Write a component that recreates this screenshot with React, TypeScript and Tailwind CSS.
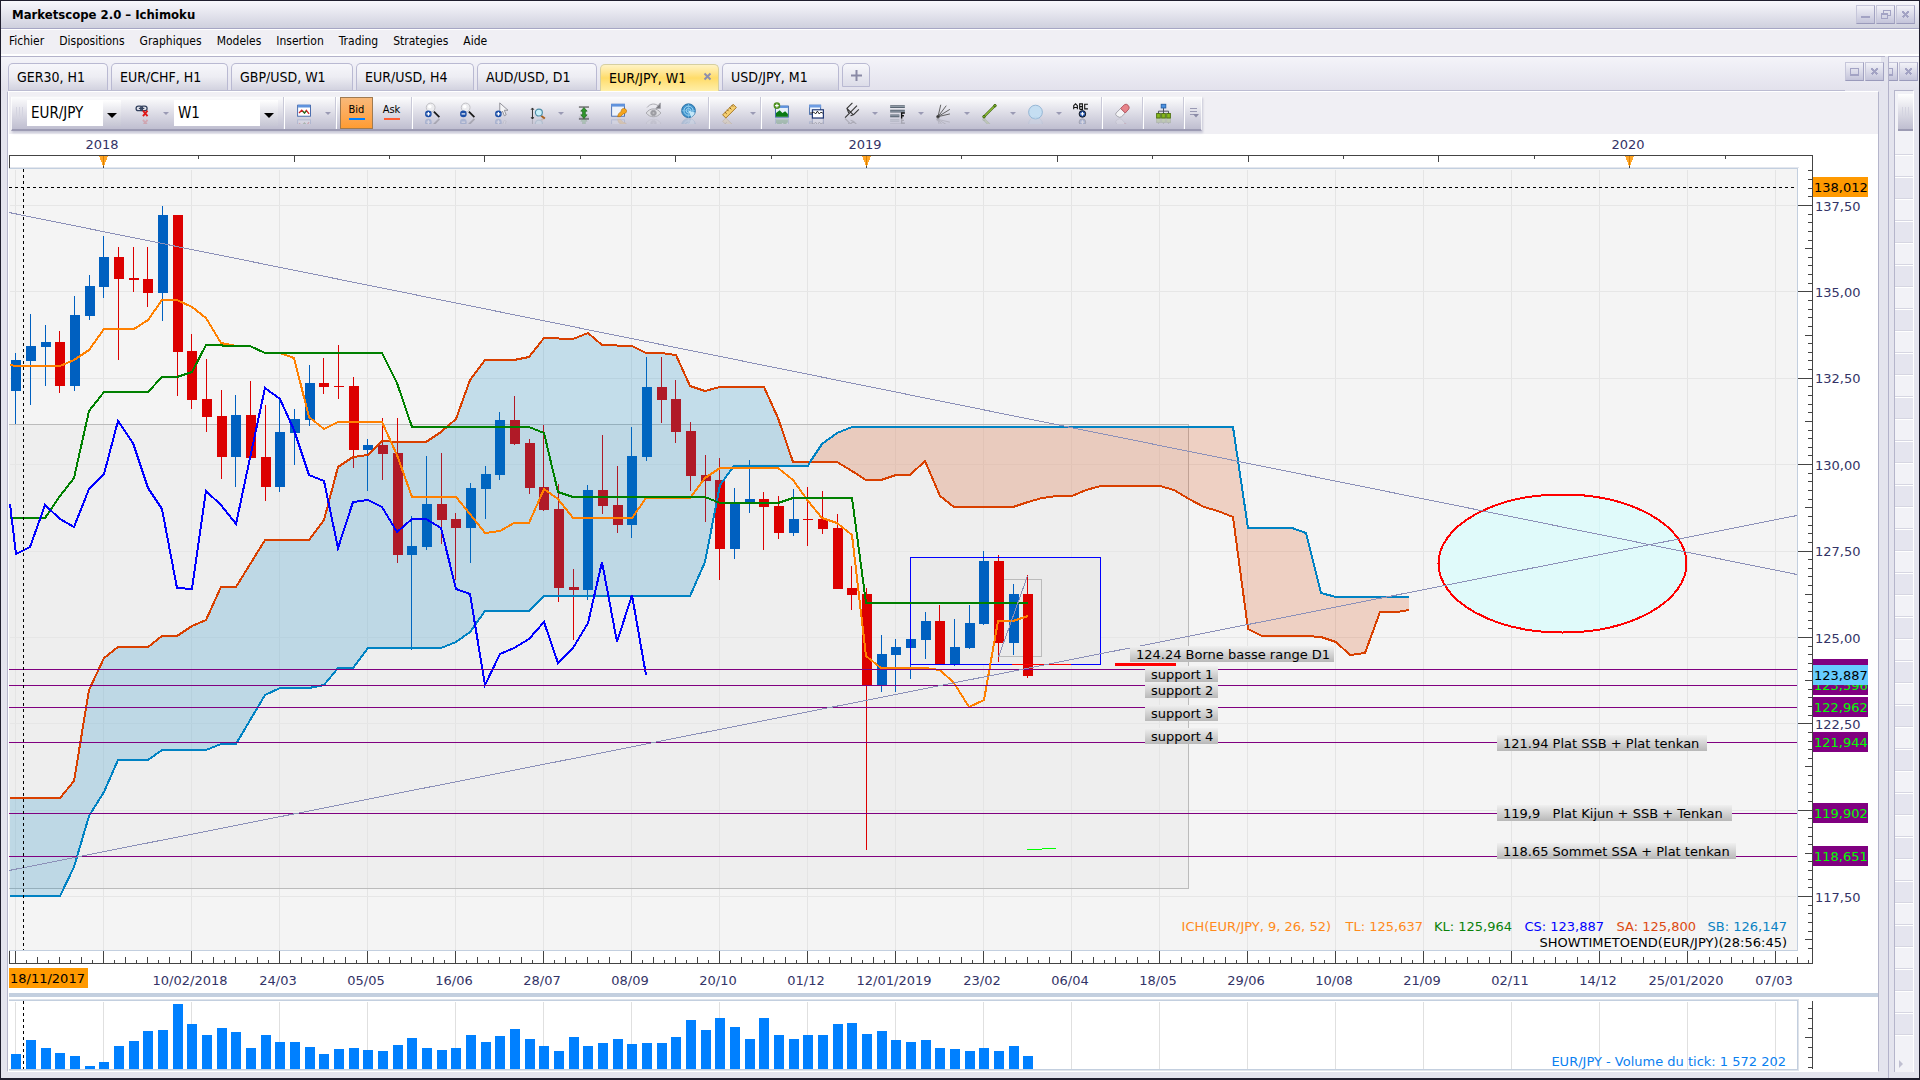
import React from "react";

const SANS = "font-['DejaVu_Sans_Condensed','Noto_Sans',sans-serif]";

/* ---------- chart data (chart pixel space, one slot per week) ---------- */

const cx = (i: number) => Math.round(15.2 + (44 / 3) * i);

type Candle = [dir: "u" | "d", high: number, top: number, bottom: number, low: number];
const candles: Candle[] = [
  ["u", 353, 360, 391, 424], ["u", 314, 346, 361, 405], ["u", 325, 342, 347, 386], ["d", 331, 342, 386, 393],
  ["u", 296, 315, 386, 391], ["u", 275, 286, 316, 320], ["u", 236, 257, 287, 298], ["d", 247, 257, 279, 360],
  ["d", 247, 278, 280, 292], ["d", 247, 279, 293, 307], ["u", 206, 215, 293, 321], ["d", 215, 215, 352, 396],
  ["d", 334, 351, 400, 409], ["d", 359, 399, 417, 432], ["d", 390, 416, 457, 479], ["u", 395, 415, 457, 487],
  ["d", 381, 415, 458, 458], ["d", 405, 457, 487, 501], ["u", 400, 432, 487, 492], ["u", 409, 419, 433, 465],
  ["u", 365, 383, 420, 426], ["d", 358, 383, 387, 394], ["d", 345, 386, 387, 399], ["d", 377, 386, 450, 468],
  ["u", 439, 445, 450, 491], ["d", 418, 445, 454, 480], ["d", 418, 453, 555, 563], ["u", 516, 546, 555, 650],
  ["u", 456, 504, 547, 550], ["d", 453, 504, 520, 544], ["d", 513, 519, 528, 580], ["u", 483, 488, 528, 563],
  ["u", 466, 474, 489, 519], ["u", 412, 420, 475, 480], ["d", 396, 420, 444, 445], ["d", 439, 443, 488, 494],
  ["d", 425, 487, 510, 511], ["d", 484, 509, 588, 602], ["d", 569, 587, 590, 640], ["u", 485, 490, 590, 600],
  ["d", 435, 490, 506, 514], ["d", 466, 505, 525, 533], ["u", 427, 456, 525, 538], ["u", 357, 387, 457, 461],
  ["d", 357, 387, 400, 423], ["d", 380, 399, 432, 443], ["d", 422, 431, 476, 491], ["d", 455, 475, 481, 522],
  ["d", 458, 480, 549, 580], ["u", 488, 503, 549, 559], ["u", 460, 499, 502, 513], ["d", 492, 499, 507, 550],
  ["d", 496, 506, 533, 539], ["u", 489, 519, 533, 536], ["d", 487, 519, 520, 546], ["d", 491, 519, 529, 534],
  ["d", 514, 528, 589, 589], ["d", 566, 588, 595, 610], ["d", 588, 594, 685, 850], ["u", 635, 654, 685, 692],
  ["u", 639, 647, 655, 692], ["u", 627, 639, 648, 679], ["u", 612, 621, 640, 659], ["d", 605, 621, 664, 665],
  ["u", 619, 647, 664, 666], ["u", 605, 623, 648, 649], ["u", 551, 561, 624, 625], ["d", 555, 561, 643, 662],
  ["u", 584, 594, 643, 655], ["d", 575, 594, 676, 678],
];

type Pt = [slot: number, y: number];
const tenkan: Pt[] = [
  [-0.4, 365], [0, 366], [3, 366], [4, 360], [5, 350], [6, 329], [8.1, 329], [9, 320], [10, 300], [11, 300], [12, 307],
  [13, 318], [14, 343], [15, 346], [16, 346], [17, 353], [18, 353], [19, 358], [20, 417], [21, 429], [22, 422], [25, 422],
  [26, 455], [27, 497], [30, 497], [31, 514], [32, 533], [33, 531], [34, 523], [35, 523], [36, 489], [37, 499], [38, 518],
  [42, 518], [43, 498], [46, 498], [47, 478], [48, 468], [52, 468], [53, 480], [54, 501], [55, 518], [56, 523], [57, 535],
  [58, 656], [59, 668], [62, 668], [63, 670], [64, 683], [65, 707], [66, 700], [67, 621], [68, 621], [69, 616],
];
const kijun: Pt[] = [
  [-0.4, 518], [2, 518], [3, 496], [4, 478], [5, 411], [6, 392], [9, 392], [10, 377], [11, 377], [12, 372], [13, 345],
  [14, 345], [14.2, 346], [16, 346], [17, 353], [25, 353], [26, 383], [27, 427], [35, 427], [36, 433], [37, 492], [38, 497],
  [47, 497], [48, 503], [52, 503], [53, 498], [57, 498], [58, 603], [69, 603],
];
const chikou: Pt[] = [
  [-0.4, 504], [0, 554], [1, 547], [2, 505], [3, 519], [4, 527], [5, 489], [6, 474], [7, 421], [8, 443], [9, 488],
  [10, 509], [11, 588], [12, 589], [13, 491], [14, 505], [15, 524], [16, 458], [17, 388], [18, 399], [19, 430], [20, 475],
  [21, 481], [22, 548], [23, 502], [24, 500], [25, 507], [26, 532], [27, 519], [28, 519], [29, 528], [30, 589], [31, 594],
  [32, 685], [33, 654], [34, 648], [35, 639], [36, 622], [37, 663], [38, 648], [39, 623], [40, 562], [41, 642], [42, 595],
  [43, 675],
];
const spanA1: Pt[] = [
  [-0.4, 798], [3, 798], [4, 781], [5, 690], [6, 658], [7, 647], [9, 647], [10, 636], [11, 636], [12, 626], [13, 620],
  [14, 587], [15, 587], [17, 540], [20, 540], [21, 520], [22, 467], [23, 457], [24, 455], [25, 441], [26, 442], [28, 442],
  [29, 432], [30, 419], [31, 380], [32, 360], [34, 360], [35, 357], [36, 338], [38, 339], [39, 333], [40, 345], [42, 346],
  [43, 353], [44, 353], [45, 355], [46, 386], [47, 391], [48, 387], [51, 387], [52, 418], [53, 462], [54.2, 462],
];
const spanA2: Pt[] = [
  [54.2, 462], [56, 462], [57, 471], [58, 480], [59, 480], [60, 475], [61, 475], [62, 461], [63, 496], [64, 507],
  [68, 507], [69, 502], [70, 498], [71, 496], [72, 496], [73, 490], [74, 486], [78, 486], [79, 490], [80, 499], [81, 507],
  [82, 511], [83, 517], [84, 629], [85, 636], [88, 636], [89, 637], [90, 642], [91, 655], [92, 653], [93, 612], [94.2, 612],
  [95, 610],
];
const spanB1: Pt[] = [
  [-0.4, 896], [3, 896], [4, 867], [5, 816], [6, 792], [7, 760], [9, 760], [10, 750], [13, 750], [14, 744], [15, 744],
  [17, 695], [18, 688], [20, 688], [21, 685], [22, 668], [23, 668], [24, 648], [29, 648], [30, 642], [31, 632], [32, 611],
  [35, 611], [36, 596], [46, 596], [47, 562], [48, 485], [49, 466], [54, 466], [54.2, 462],
];
const spanB2: Pt[] = [
  [54.2, 462], [55, 444], [56, 433], [57, 427], [83, 427], [84, 528], [87, 528], [88, 533], [89, 593], [90, 597],
  [95, 597],
];

const pts = (a: Pt[]) => a.map(([i, y]) => `${Math.round(15.5 + (44 / 3) * i)},${y}`).join(" ");

const volumeTops = [
  1054, 1040, 1048, 1053, 1056, 1066, 1062, 1046, 1041, 1031, 1030, 1004, 1024, 1035, 1028, 1032, 1048, 1035, 1042, 1042,
  1047, 1054, 1049, 1048, 1050, 1051, 1045, 1038, 1048, 1050, 1048, 1035, 1042, 1036, 1029, 1039, 1046, 1051, 1037, 1046,
  1043, 1039, 1044, 1043, 1043, 1037, 1020, 1030, 1018, 1027, 1039, 1018, 1035, 1039, 1035, 1035, 1024, 1023, 1034, 1031,
  1040, 1042, 1040, 1048, 1049, 1051, 1048, 1051, 1046, 1056,
];

const range = (n: number) => Array.from({ length: n }, (_, k) => k);

const dates: [number, string][] = [
  [2, "10/02/2018"], [3, "24/03"], [4, "05/05"], [5, "16/06"], [6, "28/07"], [7, "08/09"], [8, "20/10"], [9, "01/12"],
  [10, "12/01/2019"], [11, "23/02"], [12, "06/04"], [13, "18/05"], [14, "29/06"], [15, "10/08"], [16, "21/09"],
  [17, "02/11"], [18, "14/12"], [19, "25/01/2020"], [20, "07/03"],
];

const prices: [number, string][] = [
  [205, "137,50"], [291, "135,00"], [377, "132,50"], [464, "130,00"], [550, "127,50"], [637, "125,00"], [723, "122,50"],
  [896, "117,50"],
];

const notes: [x: number, y: number, w: number, text: string][] = [
  [1130, 646, 204, "124.24 Borne basse range D1"],
  [1145, 666, 73, "support 1"],
  [1145, 682, 73, "support 2"],
  [1145, 705, 73, "support 3"],
  [1145, 728, 73, "support 4"],
  [1497, 735, 210, "121.94 Plat SSB + Plat tenkan"],
  [1497, 805, 235, "119,9   Plat Kijun + SSB + Tenkan"],
  [1497, 843, 239, "118.65 Sommet SSA + Plat tenkan"],
];

const badges: [y: number, text: string, bg: string, fg: string][] = [
  [187, "138,012", "#ff9900", "#000"],
  [669, "", "#800080", "#00ff00"],
  [685, "123,596", "#800080", "#00ff00"],
  [707, "122,962", "#800080", "#00ff00"],
  [742, "121,944", "#800080", "#00ff00"],
  [813, "119,902", "#800080", "#00ff00"],
  [856, "118,651", "#800080", "#00ff00"],
  [675, "123,887", "#66ccff", "#000"],
];

const legend: [x: number, color: string, text: string][] = [
  [1331, "#ff8a1a", "ICH(EUR/JPY, 9, 26, 52)"],
  [1423, "#ff8a1a", "TL: 125,637"],
  [1512, "#0a820a", "KL: 125,964"],
  [1604, "#0000ff", "CS: 123,887"],
  [1696, "#dc4a10", "SA: 125,800"],
  [1787, "#0a82c3", "SB: 126,147"],
];

function Chart() {
  return (
    <svg
      viewBox="9 134 1869 937"
      role="img"
      aria-label="EUR/JPY weekly Ichimoku chart"
      className="block h-auto w-full bg-white font-['DejaVu_Sans',Verdana,sans-serif] text-[13px]"
    >
      <defs>
        <linearGradient id="note" x1="0" y1="0" x2="0" y2="1">
          <stop offset="0" stopColor="#f0f0f0" />
          <stop offset="1" stopColor="#b8b8b8" />
        </linearGradient>
      </defs>

      <g shapeRendering="crispEdges">
        <rect x="9" y="168" width="1788" height="783" fill="#f4f4f4" />
        <rect x="9" y="424" width="1179" height="464" fill="#eeeeee" />

        {/* grid */}
        {range(21).map((k) => (
          <g key={k} fill="#e4e4e4">
            <rect x={15 + 88 * k} y="170" width="1" height="780" />
            <rect x={15 + 88 * k} y="1002" width="1" height="67" fill="#e0e0e0" />
          </g>
        ))}
        {range(9).map((k) => (
          <rect key={k} x="10" y={Math.round(205 + 86.375 * k)} width="1786" height="1" fill="#e6e6e6" />
        ))}
        <path d="M9 424.5H1188.5V888.5H9" fill="none" stroke="#bbbbbb" />
        <path d="M9 168.5H1797.5V950.5H9" fill="none" stroke="#c3cfdf" />
        <path d="M9 167.5H1798.5" fill="none" stroke="#e4e7ee" />

        {/* range boxes and target ellipse */}
        <rect x="910" y="557" width="190" height="107" fill="#eaeaea" />
        <path d="M998.5 579.5H1041.5V656.5H998.5" fill="none" stroke="#bbbbbb" />
        <ellipse cx="1562.5" cy="563.5" rx="124" ry="69" fill="#e0fafa" stroke="#ff0000" strokeWidth="2" />
        <path d="M1599.5 499V628" stroke="#d6f4f4" />

        {/* candles */}
        {candles.map(([dir, high, top, bottom, low], i) => (
          <g key={i} fill={dir === "u" ? "#0060c0" : "#dc0000"}>
            <rect x={cx(i)} y={high} width="1" height={low - high} />
            <rect x={cx(i) - 4} y={top} width="10" height={bottom - top} />
          </g>
        ))}

        {/* cloud */}
        <polygon points={pts([...spanA1, ...[...spanB1].reverse()])} fill="#0082c3" fillOpacity="0.2" />
        <polygon points={pts([...spanB2, ...[...spanA2].reverse()])} fill="#d94000" fillOpacity="0.2" />

        {/* box range */}
        <rect x="910.5" y="557.5" width="190" height="107" fill="none" stroke="#0000ff" />
        <path d="M1012 664.5H1071" stroke="#ff0000" />
        <path d="M1115 664.5H1176" stroke="#ff0000" strokeWidth="3" />

        <g fill="none" strokeWidth="2">
          <polyline points={pts(spanA1)} stroke="#d94000" />
          <polyline points={pts(spanA2)} stroke="#d94000" />
          <polyline points={pts(spanB1)} stroke="#0082c3" />
          <polyline points={pts(spanB2)} stroke="#0082c3" />
          <polyline points={pts(tenkan)} stroke="#ff8000" />
          <polyline points={pts(kijun)} stroke="#008000" />
          <polyline points={pts(chikou)} stroke="#0000ff" />
        </g>
        <path d="M1027 849.5H1042M1042 848.5H1056" stroke="#00ff00" />

        {/* horizontal levels */}
        {[669, 685, 707, 742, 813, 856].map((y) => (
          <rect key={y} x="9" y={y} width="1788" height="1" fill="#800080" />
        ))}
        <path d="M9 212.5L1797 574.5M9 870.5L1797 515.5M998.5 657L1027.5 576" fill="none" stroke="#8c90b8" />

        {/* cursor */}
        <path d="M9 187.5H1797" stroke="#000" strokeDasharray="3 3" />
        <path d="M23.5 169V950M23.5 1001V1069" stroke="#000" strokeDasharray="3 3" />

        {/* axes */}
        <path d="M9.5 168V155.5H1812.5V963.5H9.5V951M1812.5 1001V1069" fill="none" stroke="#444444" />
        {range(18).map((k) =>
          k % 8 === 0 ? null : (
            <rect key={k} x={Math.round(102.8 + 95.4 * k)} y="156" width="1" height={k % 2 ? 3 : 6} fill="#444444" />
          ),
        )}
        {range(164).map((k) => {
          const h = k % 8 === 0 ? 12 : k % 2 === 0 ? 6 : 3;
          return <rect key={k} x={15 + 11 * k} y={963 - h} width="1" height={h} fill="#444444" />;
        })}
        {range(91).map((k) => {
          const n = k - 4;
          const w = n % 10 === 0 ? 14 : n % 5 === 0 ? 7 : 4;
          return <rect key={k} x={1812 - w} y={Math.round(205 + 8.6375 * n)} width={w} height="1" fill="#444444" />;
        })}
        {[1008, 1018, 1028, 1037, 1047, 1057, 1067].map((y) => (
          <rect key={y} x={y === 1037 ? 1805 : 1808} y={y} width={y === 1037 ? 7 : 4} height="1" fill="#444444" />
        ))}
        {[103, 866, 1629].map((x) => (
          <g key={x}>
            <path d={`M${x - 4} 156H${x + 5}L${x + 0.5} 167Z`} fill="#ffa526" />
            <rect x={x} y="156" width="1" height="10" fill="#dd8200" />
            <rect x={x} y="166" width="1" height="2" fill="#444444" />
          </g>
        ))}

        {/* volume pane */}
        <rect x="9" y="993" width="1869" height="4" fill="#c3cfdf" />
        <path d="M9 999.5H1798.5V1070.5H9" fill="none" stroke="#dfe3ea" />
        <path d="M9 1000.5H1797.5V1069.5H9" fill="none" stroke="#c3cfdf" />
        {volumeTops.map((y, i) => (
          <rect key={i} x={cx(i) - 4} y={y} width="10" height={1069 - y} fill="#0080ff" />
        ))}

        {notes.map(([x, y, w, t]) => (
          <rect key={t} x={x} y={y} width={w} height="16" fill="url(#note)" />
        ))}
        <rect x="9" y="968" width="79" height="20" fill="#ff9900" />
      </g>

      {/* labels */}
      {notes.map(([x, y, , t]) => (
        <text key={t} x={x + 6} y={y + 13} fill="#000" className="whitespace-pre">
          {t}
        </text>
      ))}
      <text x="10" y="983" fill="#000">18/11/2017</text>
      <g fill="#333366" textAnchor="middle">
        {dates.map(([k, t]) => (
          <text key={t} x={14 + 88 * k} y="985">{t}</text>
        ))}
        <text x="102" y="149">2018</text>
        <text x="865" y="149">2019</text>
        <text x="1628" y="149">2020</text>
      </g>
      <g fill="#333366">
        {prices.map(([y, t]) => (
          <text key={t} x="1815" y={y + 6}>{t}</text>
        ))}
      </g>
      {badges.map(([y, t, bg, fg]) => (
        <g key={y}>
          <rect x="1813" y={y - 10} width="55" height="20" fill={bg} />
          {t && <text x="1814" y={y + 5} fill={fg}>{t}</text>}
        </g>
      ))}
      <g textAnchor="end">
        {legend.map(([x, c, t]) => (
          <text key={t} x={x} y="931" fill={c}>{t}</text>
        ))}
        <text x="1787" y="947" fill="#000">SHOWTIMETOEND(EUR/JPY)(28:56:45)</text>
        <text x="1786" y="1066" fill="#0a80f0">EUR/JPY - Volume du tick: 1 572 202</text>
      </g>
    </svg>
  );
}

/* ---------- toolbar icons ---------- */

function Icon({ children }: { children: React.ReactNode }) {
  return (
    <svg viewBox="0 0 18 24" className="h-[22px] w-[17px] overflow-hidden" aria-hidden="true">
      <g>{children}</g>
      <g transform="translate(0 35) scale(1 -1)" opacity="0.2">{children}</g>
    </svg>
  );
}

const Plus = ({ x, y, minus = false }: { x: number; y: number; minus?: boolean }) => (
  <g>
    <circle cx={x} cy={y} r="3.6" fill="#1c4fa8" />
    <path d={minus ? `M${x - 2} ${y}h4` : `M${x - 2} ${y}h4M${x} ${y - 2}v4`} stroke="#fff" strokeWidth="1.3" />
  </g>
);

const Magnifier = () => (
  <g>
    <path d="M10.5 10.5l6 6" stroke="#1a1a1a" strokeWidth="2" />
    <circle cx="7" cy="6" r="4.800" fill="#ececef" stroke="#bdbdc2" />
    <circle cx="6" cy="5" r="2" fill="#fff" />
  </g>
);

const icons: Record<string, React.ReactNode> = {
  unlink: (
    <g fill="none" stroke="#33415e" strokeWidth="1.4">
      <rect x="2" y="4.500" width="7" height="5" rx="2.500" />
      <rect x="7" y="4.500" width="7" height="5" rx="2.500" />
      <path d="M5 7h6" />
      <path d="M9.500 9.500l5 6M14.500 9.500l-5 6" stroke="#e01818" strokeWidth="2" />
    </g>
  ),
  chart: (
    <g>
      <rect x="1.5" y="3.5" width="14" height="12" fill="#fff" stroke="#3d63a8" />
      <rect x="2" y="3" width="13" height="3" fill="#5f92dd" />
      <path d="M3 12l3-3 3 3 2-3 3 4" fill="none" stroke="#d02020" strokeWidth="1.4" />
      <path d="M7 10l2 2 2-2" fill="none" stroke="#1d7d2a" strokeWidth="1.4" />
    </g>
  ),
  zoomIn: <g><Magnifier /><Plus x={4.5} y={13} /></g>,
  zoomOut: <g><Magnifier /><Plus x={4.5} y={13} minus /></g>,
  cursor: (
    <g>
      <path d="M6 1v12l3-3 2 5 2-1-2-5h4z" fill="#f4f4f6" stroke="#8b8b94" />
      <Plus x={4.5} y={13} />
    </g>
  ),
  axisZoom: (
    <g>
      <path d="M3.5 7v11M2 8.500l1.500-2 1.500 2M2 16.500l1.500 2 1.500-2" fill="none" stroke="#222" />
      <path d="M13 15l4 3" stroke="#a86020" strokeWidth="2" />
      <circle cx="10.500" cy="11.500" r="3.800" fill="#c8f0fa" stroke="#4f8ea8" strokeWidth="1.300" />
    </g>
  ),
  height: (
    <g>
      <path d="M4 5.500h11M4 18.500h11" stroke="#222" />
      <path d="M9.500 6l3.500 4h-2v4h2l-3.500 4-3.500-4h2v-4h-2z" fill="#2f9a2c" stroke="#14590f" strokeWidth="0.700" />
    </g>
  ),
  key: (
    <g>
      <rect x="1.500" y="2.500" width="14" height="13" fill="#eef3fb" stroke="#4167ad" />
      <rect x="1" y="2" width="15" height="3" fill="#5f92dd" />
      <path d="M8 16l1-3 3-3c0-3 3-4 5-2s0 5-3 5l-3 3z" fill="#f5a51c" stroke="#b06a05" strokeWidth="0.700" />
    </g>
  ),
  eye: (
    <g fill="none" stroke="#a2a2a8">
      <path d="M1 12c4-6 12-6 16 0-4 5.500-12 5.500-16 0z" fill="#dedee2" />
      <circle cx="9" cy="12" r="3" fill="#9a9aa0" />
      <circle cx="9" cy="12" r="1" fill="#eee" />
      <path d="M2 6c3-4 8-5 12-2" />
      <path d="M16.500 1v6h-5z" fill="#77777d" />
    </g>
  ),
  radar: (
    <g>
      <circle cx="9" cy="9.500" r="7.500" fill="#3f92cc" stroke="#2a6ea3" />
      <circle cx="9" cy="9.500" r="5" fill="none" stroke="#a8dbf5" />
      <circle cx="9" cy="9.500" r="2.500" fill="none" stroke="#a8dbf5" />
      <path d="M9 2v15M1.500 9.500h15" stroke="#86c6ea" strokeWidth="0.700" />
      <path d="M9 9.500l7 2a7.500 7.500 0 0 1-4 5z" fill="#c4e7f8" />
    </g>
  ),
  ruler: (
    <g>
      <path d="M1.500 14L13 2.500l3.500 3.500L5 17.500z" fill="#f6cf71" stroke="#a06f1a" />
      <path d="M4 11l2 2M6.500 8.500l1.500 1.500M9 6l2 2M11.500 3.500l1.500 1.500" stroke="#7d5210" />
    </g>
  ),
  picture: (
    <g>
      <rect x="2.500" y="4.500" width="14" height="12" fill="#e8f1fa" stroke="#3a64a5" />
      <rect x="3" y="4" width="13" height="2.500" fill="#5f92dd" />
      <path d="M3 16v-4l4-3 3 3 3-2 3 3v3z" fill="#0b7a15" />
      <circle cx="4" cy="4" r="3.600" fill="#4d8f1f" />
      <path d="M2 4h4M4 2v4" stroke="#fff" strokeWidth="1.200" />
    </g>
  ),
  windows: (
    <g>
      <rect x="1.500" y="3.500" width="12" height="10" fill="#f4f8ff" stroke="#3a64a5" />
      <rect x="1" y="3" width="13" height="3" fill="#6d9ce3" />
      <rect x="4.500" y="8.500" width="12" height="9" fill="#fff" stroke="#1d3673" strokeWidth="1.300" />
      <path d="M2 12h2l2-1 2 2 2-3 2 3 2-2 1 1h1" fill="none" stroke="#111" />
    </g>
  ),
  pitchfork: (
    <g fill="none" stroke="#333" strokeWidth="1.200">
      <path d="M2 17L15 4M4 7l7 7M6 12L4 7l6-6M11 14l6-6M8 15l3-1" />
    </g>
  ),
  lines: (
    <g>
      <path d="M1 5h16M1 10h16M1 15h10" stroke="#55606e" strokeWidth="3" />
      <path d="M1 5h16M1 10h16M1 15h10" stroke="#b9c3cf" strokeWidth="0.700" />
      <path d="M13.500 18v-6H17M13.500 15H16" fill="none" stroke="#111" strokeWidth="1.500" />
    </g>
  ),
  fan: (
    <g stroke="#555" fill="none">
      <path d="M3 16L6 3M3 16L12 4M3 16L16 8M3 16l13-3" />
      <circle cx="3" cy="16" r="1.500" fill="#333" />
    </g>
  ),
  line: (
    <g>
      <path d="M3 16L15 4" stroke="#3c6410" strokeWidth="2.600" />
      <path d="M3 16L15 4" stroke="#9dcc3c" strokeWidth="1.200" />
      <circle cx="3" cy="16" r="1.400" fill="#86b82c" stroke="#3c6410" />
      <circle cx="15" cy="4" r="1.400" fill="#86b82c" stroke="#3c6410" />
    </g>
  ),
  ellipse: <circle cx="9" cy="11" r="7.500" fill="#c5def2" stroke="#8fb2d2" />,
  text: (
    <g fill="none" stroke="#111">
      <path d="M.5 8V4l2-2 2 2v4M.5 6h4M7 8V2h3v6H7M7 5h3M16 2.500h-3.500v5H16" strokeWidth="1.200" />
      <Plus x={10} y={13} />
    </g>
  ),
  eraser: (
    <g>
      <path d="M2 12l5-5 5 5-4 4q-2 1.500-4 0l-2-1.500q-1-1 0-2.500z" fill="#f4f4f6" stroke="#a0a0a8" />
      <path d="M7 7l4-4q2-1.500 4 .5t1 4l-4 4.500z" fill="#e8838a" stroke="#b0525c" />
    </g>
  ),
  tree: (
    <g>
      <path d="M9 6v4M3.500 13v-3h11v3M9 10v3" fill="none" stroke="#445" />
      <rect x="6.500" y="2.500" width="5" height="4" fill="#4a90e0" stroke="#2460a8" />
      <g fill="#86b81c" stroke="#4c7010">
        <rect x="1.500" y="12.500" width="4" height="5" />
        <rect x="7" y="12.500" width="4" height="5" />
        <rect x="12.500" y="12.500" width="4" height="5" />
      </g>
    </g>
  ),
};

type Item = "sep" | [icon: string, label: string, menu?: boolean];
const tools: Item[] = [
  ["zoomIn", "Zoom avant"], ["zoomOut", "Zoom arrière"], ["cursor", "Curseur"], ["axisZoom", "Zoom axe", true],
  ["height", "Ajuster"], ["key", "Propriétés"], ["eye", "Afficher"], ["radar", "Radar"], "sep",
  ["ruler", "Mesure", true], "sep",
  ["picture", "Ajouter image"], ["windows", "Fenêtres"], ["pitchfork", "Fourchette", true], ["lines", "Fibonacci", true],
  ["fan", "Éventail", true], ["line", "Ligne", true], ["ellipse", "Ellipse", true], ["text", "Texte"], "sep",
  ["eraser", "Gomme"], "sep", ["tree", "Objets"], "sep",
];

const Sep = () => <span className="mx-[2px] h-8 w-[2px] shrink-0 border-l border-[#c9c9d8] bg-white" />;

function Tool({ icon, label, menu }: { icon: string; label: string; menu?: boolean }) {
  return (
    <>
      <button type="button" aria-label={label} className="flex h-8 w-[35px] shrink-0 items-center justify-center">
        <Icon>{icons[icon]}</Icon>
      </button>
      {menu && (
        <button type="button" aria-label={`${label} : options`} className="flex h-8 w-[11px] shrink-0 items-center justify-center">
          <span className="border-x-[3px] border-t-[3px] border-x-transparent border-t-[#9a9ab4]" />
        </button>
      )}
    </>
  );
}

function Combo({ label, value, width }: { label: string; value: string; width: string }) {
  return (
    <div className={`relative h-[26px] shrink-0 bg-white ${width}`}>
      <select
        aria-label={label}
        defaultValue={value}
        className="h-full w-full appearance-none bg-transparent pl-1 text-[15px] text-black outline-none"
      >
        <option>{value}</option>
      </select>
      <span className="pointer-events-none absolute inset-y-0 right-0 flex w-[18px] items-center justify-center bg-linear-to-b from-white to-[#c6c6d4]">
        <span className="mt-1 border-x-[5px] border-t-[5px] border-x-transparent border-t-black" />
      </span>
    </div>
  );
}

/* ---------- window chrome ---------- */

function WinButton({ kind }: { kind: "min" | "restore" | "max" | "close" }) {
  return (
    <button
      type="button"
      aria-label={kind}
      className="flex size-[19px] shrink-0 items-center justify-center border border-[#c6c6da] border-r-[#a3a3c2] border-b-[#9a9abb] bg-linear-to-b from-[#f2f2f8] to-[#c4c4da]"
    >
      <svg viewBox="0 0 11 11" className="size-[11px]" fill="none" stroke="#a3a3c4" shapeRendering="crispEdges">
        {kind === "min" && <path d="M1 8h9" strokeWidth="2" />}
        {kind === "max" && <path d="M1.500 2v7h8V2M1 2.500h9" strokeWidth="1.500" />}
        {kind === "restore" && <path d="M3.500 4V1.500h7v5H8M1 5h7M1.500 5v4.500h6V5" strokeWidth="1.500" />}
        {kind === "close" && <path d="M2.500 2.500l6 6M8.500 2.500l-6 6" strokeWidth="2" />}
      </svg>
    </button>
  );
}

const menus = ["Fichier", "Dispositions", "Graphiques", "Modeles", "Insertion", "Trading", "Strategies", "Aide"];

const tabs: [string, string][] = [
  ["GER30, H1", "w-[100px]"],
  ["EUR/CHF, H1", "w-[117px]"],
  ["GBP/USD, W1", "w-[122px]"],
  ["EUR/USD, H4", "w-[118px]"],
  ["AUD/USD, D1", "w-[120px]"],
  ["EUR/JPY, W1", "w-[119px]"],
  ["USD/JPY, M1", "w-[117px]"],
];

export default function App() {
  return (
    <div className={`flex min-h-screen flex-col border border-b-2 border-[#1f1e2e] bg-[#e4e4ee] text-black ${SANS}`}>
      <header className="flex h-7 shrink-0 items-center justify-between border-b border-[#a6a6c4] bg-linear-to-b from-[#f8f8fc] to-[#cfd0de] pr-1 pl-[11px]">
        <h1 className="text-[13px] leading-4 font-bold">Marketscope 2.0 – Ichimoku</h1>
        <div className="flex gap-px">
          <WinButton kind="min" />
          <WinButton kind="restore" />
          <WinButton kind="close" />
        </div>
      </header>

      <nav className="flex h-[27px] shrink-0 gap-[15px] border-t border-b-2 border-white bg-[#f0eff4] pt-[3px] pl-2 text-[12px] leading-4">
        {menus.map((m) => (
          <button type="button" key={m} className="h-4">
            {m}
          </button>
        ))}
      </nav>

      <div className="flex flex-1 gap-[3px]">
        <main className="flex min-w-0 flex-1 flex-col border-t border-[#b3b2ca] bg-[#e4e4ee] pr-1">
          <div className="flex h-[34px] items-end bg-linear-to-b from-[#f4f4f9] to-[#e2e1ec]">
            <div className="ml-[7px] flex flex-1 items-end gap-[3px] border-b border-[#bcbcd2]" role="tablist">
              {tabs.map(([t, w]) => {
                const on = t === "EUR/JPY, W1";
                return (
                  <div
                    key={t}
                    className={`flex h-[27px] shrink-0 items-center rounded-t-[5px] border border-b-0 pl-2 ${w} ${
                      on
                        ? "-mb-px h-7 border-[#d6cfa0] bg-linear-to-b from-[#fff3c4] via-[#ffdc68] to-[#ffefa8]"
                        : "border-[#b9b9d2] bg-linear-to-b from-[#f7f7fb] via-[#ededf3] to-[#d2d2df]"
                    }`}
                  >
                    <button type="button" role="tab" aria-selected={on} className="text-[14px] leading-4 whitespace-nowrap">
                      {t}
                    </button>
                    {on && (
                      <button type="button" aria-label="Fermer" className="-mt-1 mr-[6px] ml-auto">
                        <svg viewBox="0 0 9 9" className="size-[9px]" stroke="#8f8fac" strokeWidth="2">
                          <path d="M1.500 1.500l6 6M7.500 1.500l-6 6" />
                        </svg>
                      </button>
                    )}
                  </div>
                );
              })}
              <button
                type="button"
                aria-label="Ajouter"
                className="mb-[3px] flex h-6 w-7 items-center justify-center rounded-t-[5px] border border-[#b9b9d2] bg-linear-to-b from-[#f7f7fb] to-[#dcdce8]"
              >
                <svg viewBox="0 0 11 11" className="size-[11px]" stroke="#8a8aa6" strokeWidth="2">
                  <path d="M5.500 0v11M0 5.500h11" />
                </svg>
              </button>
            </div>
            <div className="-mr-[3px] flex h-full shrink-0 items-start gap-px pt-[5px]">
              <WinButton kind="max" />
              <WinButton kind="close" />
            </div>
          </div>

          <div className="mr-[2px] ml-[6px] border-x border-t border-x-[#b5b5cb] border-t-white border-b border-b-white">
            <div className="border-l border-white bg-[#f0eff4] pt-1 pb-[3px] pl-[2px]">
              <div className="inline-flex h-[35px] items-center border border-b-2 border-white/80 border-b-[#9c9bb3] bg-linear-to-b from-[#fcfcfd] to-[#bfbed0] align-top shadow-[1px_2px_2px_#c8c8d6]">
                <span className="flex w-[15px] shrink-0 justify-center gap-[2px]">
                  <i className="h-3 w-px bg-[#d4d4e0]" />
                  <i className="h-3 w-px bg-[#d4d4e0]" />
                  <i className="h-3 w-px bg-[#d4d4e0]" />
                </span>
                <Combo label="Instrument" value="EUR/JPY" width="w-[94px]" />
                <span className="w-1 shrink-0" />
                <Tool icon="unlink" label="Lier" menu />
                <span className="w-[3px] shrink-0" />
                <Combo label="Période" value="W1" width="w-[104px]" />
                <span className="w-[3px] shrink-0" />
                <Sep />
                <Tool icon="chart" label="Graphique" menu />
                <Sep />
                <button type="button" aria-pressed="true" className="mx-px flex h-8 w-[33px] shrink-0 flex-col items-center justify-center gap-px border border-[#a07a50] bg-linear-to-b from-[#f8b878] to-[#ff9c30] text-[11px] leading-[14px]">
                  Bid
                  <span className="mb-1 h-[2px] w-4 bg-[#0080ff]" />
                </button>
                <button type="button" className="flex h-8 w-[35px] shrink-0 flex-col items-center justify-center gap-px text-[11px] leading-[14px]">
                  Ask
                  <span className="mb-1 h-[2px] w-4 bg-[#ff5c33]" />
                </button>
                <Sep />
                {tools.map((t, i) => (t === "sep" ? <Sep key={i} /> : <Tool key={i} icon={t[0]} label={t[1]} menu={t[2]} />))}
                <button type="button" aria-label="Options" className="flex h-8 w-[14px] shrink-0 items-center justify-center">
                  <svg viewBox="0 0 9 12" className="h-3 w-[9px]">
                    <path d="M0 1.500h7M0 4.500h7M0 7.500h4" stroke="#9a9ab4" />
                    <path d="M3 7h6l-3 3.500z" fill="#8a8aa6" />
                  </svg>
                </button>
              </div>
            </div>
            <div className="border-l border-white">
              <Chart />
            </div>
          </div>
        </main>

        <aside className="flex w-[31px] shrink-0 flex-col border-t border-l border-[#b3b2ca] bg-[#e4e4ee]">
          <div className="flex h-[33px] items-start justify-end gap-px overflow-hidden bg-linear-to-b from-[#f4f4f9] to-[#e2e1ec] pt-[5px] pr-px">
            <WinButton kind="max" />
            <WinButton kind="close" />
          </div>
          <div className="mr-[5px] mb-[6px] ml-[5px] flex flex-1 flex-col border-t border-l border-t-[#b5b5cb] border-l-[#b5b5cb] border-r border-r-white bg-[#f2f2f7]">
            <div className="mt-[3px] ml-[3px] flex h-[37px] items-center justify-center gap-[2px] border-b-2 border-[#9c9bb3] bg-linear-to-b from-white to-[#bfbed0]">
              <i className="h-[9px] w-px bg-[#d4d4e0]" />
              <i className="h-[9px] w-px bg-[#d4d4e0]" />
              <i className="h-[9px] w-px bg-[#d4d4e0]" />
            </div>
            <div className="mt-[23px]">
              {range(41).map((k) => (
                <div key={k} className={`h-[22px] border-t border-[#d6d6e2] shadow-[inset_0_1px_0_#fff] ${k % 2 ? "bg-[#e5e5ef]" : "bg-[#f2f2f7]"}`} />
              ))}
            </div>
            <span className="m-1 size-0 border-y-4 border-l-4 border-y-transparent border-l-[#c0c0d2]" />
          </div>
        </aside>
      </div>
    </div>
  );
}
